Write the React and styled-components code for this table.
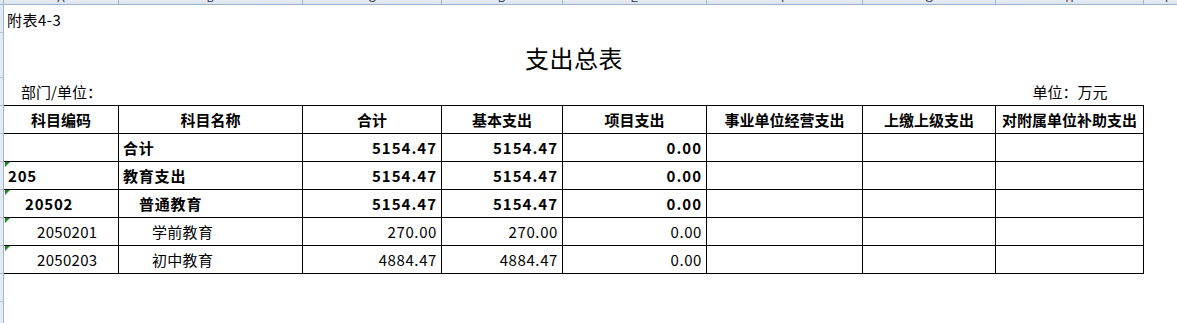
import React from 'react'
import styled, { createGlobalStyle } from 'styled-components'

const GlobalStyle = createGlobalStyle`
  html, body {
    margin: 0;
    padding: 0;
    background: #fff;
    overflow: hidden;
  }
  body {
    font-family: "Noto Sans CJK SC", "Noto Sans", sans-serif;
    font-size: 15px;
    color: #000;
  }
`

// spreadsheet grid: row header strip, 8 table columns, two spare columns
const Sheet = styled.div`
  display: grid;
  grid-template-columns: 4px 115px 184px 139px 121px 144px 156px 133px 148px 46px 120px;
  grid-template-rows: 5px 28px 45px 28px 28px repeat(5, 28px) repeat(3, 28px);
  width: max-content;
`

const Corner = styled.div`
  box-sizing: border-box;
  background: #dfe6f0;
  border-right: 1px solid #9eb6ce;
  border-bottom: 1px solid #9eb6ce;
`

const ColHead = styled.div`
  box-sizing: border-box;
  display: flex;
  justify-content: center;
  align-items: flex-end;
  overflow: hidden;
  background: linear-gradient(#e8edf4, #dae2ed);
  border-right: 1px solid #9eb6ce;
  border-bottom: 1px solid #9eb6ce;
  font-family: "Liberation Sans", sans-serif;
  font-size: 11px;
  line-height: 11px;
  color: #1f3550;
`

const RowHead = styled.div`
  box-sizing: border-box;
  background: #e2eaf5;
  border-right: 1px solid #9eb6ce;
  border-bottom: 1px solid #b3c5da;
`

const Caption = styled.div`
  grid-column: span 10;
  display: flex;
  align-items: center;
  padding-left: 3px;
  white-space: nowrap;
  letter-spacing: 0.5px;
`

const Title = styled.div`
  grid-column: span 8;
  display: flex;
  align-items: center;
  justify-content: center;
  padding-top: 3px;
  font-size: 24px;
  letter-spacing: 0.5px;
`

const UnitCell = styled.div`
  grid-column: span ${p => p.$span};
  box-sizing: border-box;
  display: flex;
  align-items: center;
  justify-content: ${p => p.$align};
  padding-left: ${p => p.$pad}px;
  border-bottom: 1px solid #000;
  white-space: nowrap;
`

const Blank = styled.div`
  grid-column: span ${p => p.$span || 1};
`

const TableCell = styled.div`
  position: relative;
  box-sizing: border-box;
  display: flex;
  align-items: center;
  padding-top: 1px;
  border-right: 1px solid #000;
  border-bottom: 1px solid #000;
  white-space: nowrap;
  line-height: 1.2;
`

const HeadCell = styled(TableCell)`
  justify-content: center;
  font-weight: 700;
`

const TextCell = styled(TableCell)`
  padding-left: ${p => p.$indent}px;
  font-weight: ${p => (p.$bold ? 700 : 400)};
  letter-spacing: ${p => (p.$bold ? 0.8 : 0.3)}px;
`

const NumCell = styled(TableCell)`
  justify-content: flex-end;
  padding-right: 4px;
  font-weight: ${p => (p.$bold ? 700 : 400)};
  letter-spacing: ${p => (p.$bold ? 1 : 0.6)}px;
`

const TextFlag = styled.span`
  position: absolute;
  top: 0;
  left: 1px;
  width: 0;
  height: 0;
  border-top: 5px solid #1b8a1b;
  border-right: 5px solid transparent;
`

const letters = ['A', 'B', 'C', 'D', 'E', 'F', 'G', 'H', 'I', 'J']

const headers = ['科目编码', '科目名称', '合计', '基本支出', '项目支出', '事业单位经营支出', '上缴上级支出', '对附属单位补助支出']

const codeIndent = [4, 21, 33]
const nameIndent = [4, 20, 33]

const rows = [
  { code: '', name: '合计', total: '5154.47', basic: '5154.47', project: '0.00', level: 0, bold: true, flag: false },
  { code: '205', name: '教育支出', total: '5154.47', basic: '5154.47', project: '0.00', level: 0, bold: true, flag: true },
  { code: '20502', name: '普通教育', total: '5154.47', basic: '5154.47', project: '0.00', level: 1, bold: true, flag: true },
  { code: '2050201', name: '学前教育', total: '270.00', basic: '270.00', project: '0.00', level: 2, bold: false, flag: true },
  { code: '2050203', name: '初中教育', total: '4884.47', basic: '4884.47', project: '0.00', level: 2, bold: false, flag: true },
]

export default function App() {
  return (
    <>
      <GlobalStyle />
      <Sheet>
        <Corner />
        {letters.map(l => (
          <ColHead key={l}>{l}</ColHead>
        ))}

        <RowHead />
        <Caption>附表4-3</Caption>

        <RowHead />
        <Title>支出总表</Title>
        <Blank $span={2} />

        <RowHead />
        <UnitCell $span={7} $align="flex-start" $pad={17}>部门/单位：</UnitCell>
        <UnitCell $span={1} $align="center" $pad={0}>单位：万元</UnitCell>
        <Blank $span={2} />

        <RowHead />
        {headers.map(h => (
          <HeadCell key={h}>{h}</HeadCell>
        ))}
        <Blank $span={2} />

        {rows.map((r, i) => (
          <React.Fragment key={i}>
            <RowHead />
            <TextCell $indent={codeIndent[r.level]} $bold={r.bold}>
              {r.flag && <TextFlag />}
              {r.code}
            </TextCell>
            <TextCell $indent={nameIndent[r.level]} $bold={r.bold}>{r.name}</TextCell>
            <NumCell $bold={r.bold}>{r.total}</NumCell>
            <NumCell $bold={r.bold}>{r.basic}</NumCell>
            <NumCell $bold={r.bold}>{r.project}</NumCell>
            <TableCell />
            <TableCell />
            <TableCell />
            <Blank $span={2} />
          </React.Fragment>
        ))}

        {[0, 1, 2].map(i => (
          <React.Fragment key={'e' + i}>
            <RowHead />
            <Blank $span={10} />
          </React.Fragment>
        ))}
      </Sheet>
    </>
  )
}
